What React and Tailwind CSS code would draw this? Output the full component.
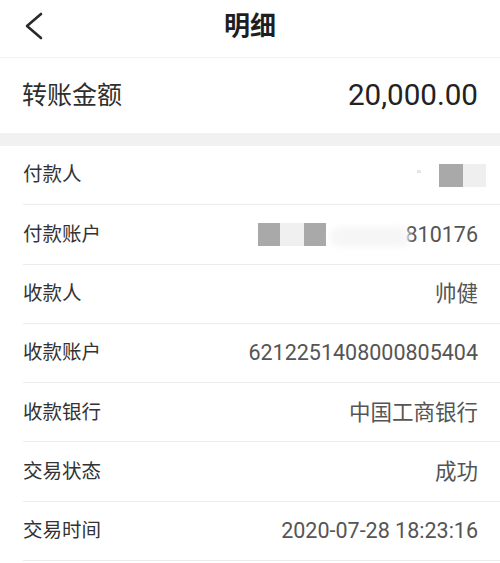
import React from "react";

const font = { fontFamily: 'Roboto, "Noto Sans CJK SC", "Noto Sans", sans-serif' };

function Row({ label, children }) {
  return (
    <div className="h-[59.3px] ml-[23px] pr-[22px] border-b border-[#ececec] flex items-center justify-between">
      <span className="text-[19.5px] text-[#333] leading-none">{label}</span>
      {children}
    </div>
  );
}

export default function App() {
  return (
    <div className="w-[500px] h-[563px] bg-white overflow-hidden" style={font}>
      <div className="h-[58px] grid grid-cols-[100px_1fr_100px] items-center pb-[6px] border-b border-[#f3f3f3]">
        <div className="pl-[24px] flex items-center">
          <svg width="19" height="28" viewBox="0 0 19 28" fill="none">
            <path d="M17 2 L3 14 L17 26" stroke="#2a2a2a" strokeWidth="2.6" strokeLinecap="round" strokeLinejoin="round" />
          </svg>
        </div>
        <div className="text-center text-[26px] font-bold text-[#1e1e1e] leading-none">明细</div>
        <div />
      </div>

      <div className="h-[75px] px-[22px] flex items-center justify-between">
        <span className="text-[25px] text-[#2e2e2e] leading-none">转账金额</span>
        <span className="text-[29.6px] text-[#222] leading-none">20,000.00</span>
      </div>

      <div className="h-[13px] bg-[#f1f1f1]" />

      <Row label="付款人">
        <div className="flex items-center">
          <div className="w-[4px] h-[3px] bg-[#e6e6e6] mr-[18px] -mt-[8px]" />
          <div className="w-[24px] h-[23px] bg-[#a9a9a9]" />
          <div className="w-[23px] h-[23px] bg-[#efefef] -mr-[8px]" />
        </div>
      </Row>
      <Row label="付款账户">
        <div className="flex items-center">
          <div className="w-[22px] h-[23px] bg-[#a9a9a9]" />
          <div className="w-[24px] h-[23px] bg-[#f0f0f0]" />
          <div className="w-[22px] h-[23px] bg-[#a9a9a9]" />
          <div className="w-[80px] h-[20px] bg-[#f6f6f6] rounded-full blur-[3px] ml-[4px] mt-[6px]" />
          <span className="text-[21.5px] text-[#555] leading-none -ml-[4px]">810176</span>
        </div>
      </Row>
      <Row label="收款人">
        <span className="text-[21.5px] text-[#555] leading-none">帅健</span>
      </Row>
      <Row label="收款账户">
        <span className="text-[21.5px] text-[#555] leading-none">6212251408000805404</span>
      </Row>
      <Row label="收款银行">
        <span className="text-[21.5px] text-[#555] leading-none">中国工商银行</span>
      </Row>
      <Row label="交易状态">
        <span className="text-[21.5px] text-[#555] leading-none">成功</span>
      </Row>
      <Row label="交易时间">
        <span className="text-[21.5px] text-[#555] leading-none">2020-07-28 18:23:16</span>
      </Row>
    </div>
  );
}
